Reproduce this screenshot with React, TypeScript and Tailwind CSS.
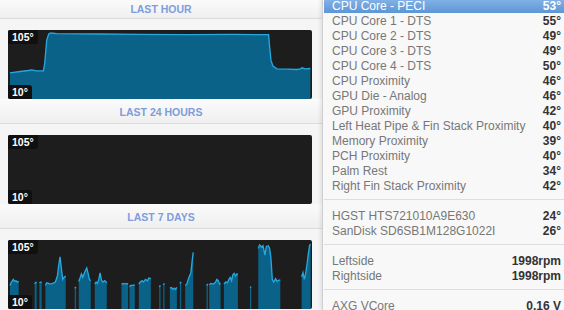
import React from "react";

const sensors: [string, string][] = [
  ["CPU Core 1 - DTS", "55°"],
  ["CPU Core 2 - DTS", "49°"],
  ["CPU Core 3 - DTS", "49°"],
  ["CPU Core 4 - DTS", "50°"],
  ["CPU Proximity", "46°"],
  ["GPU Die - Analog", "46°"],
  ["GPU Proximity", "42°"],
  ["Left Heat Pipe & Fin Stack Proximity", "40°"],
  ["Memory Proximity", "39°"],
  ["PCH Proximity", "40°"],
  ["Palm Rest", "34°"],
  ["Right Fin Stack Proximity", "42°"],
];

const disks: [string, string][] = [
  ["HGST HTS721010A9E630", "24°"],
  ["SanDisk SD6SB1M128G1022I", "26°"],
];

const fans: [string, string][] = [
  ["Leftside", "1998rpm"],
  ["Rightside", "1998rpm"],
];

// points in "3x" coordinates, viewBox maps them onto the chart
const hourLine =
  "30,218 60,214 85,211 95,209 110,212 130,212 134,190 140,120 146,102 152,99 170,101 300,102 420,103 560,104 700,103 805,104 808,140 812,180 818,198 830,206 860,207 890,208 900,206 906,203 914,206 930,205";

// spiky bursts for the 7 day view, each is its own closed shape
const weekSegments: string[] = [
  "30,250 34,240 40,232 44,238 48,236 52,240 56,238",
  "104,245 106,242 110,240",
  "118,242 122,240 125,240",
  "136,250 140,242 146,244 150,246 158,244 166,240 172,222 176,190 180,165 184,200 188,232 192,226 197,222",
  "224,258 228,255",
  "236,238 240,228 244,216 248,226 254,210 260,198 264,214 268,232 272,236",
  "284,246 288,240 292,244 296,232 300,213 304,234 308,240 314,236 320,242",
  "364,246 370,244 376,246 380,244 384,246",
  "388,254 392,250 398,250 404,248",
  "416,246 420,240 426,236 430,240 436,232 442,236 446,228 452,230",
  "477,254 481,250",
  "489,248 493,244",
  "509,258 514,256 518,262 522,258 526,262 530,256",
  "539,244 543,240",
  "555,250 560,246 564,232 568,222 572,212 576,176 579,152",
  "619,250 623,246",
  "627,248 632,244 640,246 646,240 650,232 654,236 658,246 661,244",
  "671,246 676,240 682,242 686,232 690,226 694,236 698,218 702,214 706,222 710,216 713,218",
  "749,256 753,254",
  "774,140 778,130 784,136 788,132 794,160 798,134 804,132 808,140 812,170 816,232 820,240 826,230 830,238 836,234 840,234",
  "904,224 908,212 912,232 916,214 920,188 924,156 928,130 931,128",
];

function areaFrom(points: string, bottom: number) {
  const pts = points.split(" ");
  const first = pts[0].split(",")[0];
  const last = pts[pts.length - 1].split(",")[0];
  return `M${first},${bottom} L${pts.join(" L")} L${last},${bottom} Z`;
}

const Chart = ({ children }: { children?: React.ReactNode }) => (
  <div className="relative h-[69px] bg-[#1d1d1d] rounded-[2px] overflow-hidden">
    {children}
    <div className="absolute left-0 top-0 h-[14px] px-[4px] flex items-center bg-[#101010] rounded-br-[3px] text-white font-bold text-[10.5px] leading-none">
      105°
    </div>
    <div className="absolute left-0 bottom-0 h-[14px] px-[4px] flex items-center bg-[#101010] rounded-tr-[3px] text-white font-bold text-[10.5px] leading-none">
      10°
    </div>
  </div>
);

const Header = ({ title, first }: { title: string; first?: boolean }) => (
  <div
    className={`flex items-center justify-center border-b border-[#dcdcdc] bg-gradient-to-b from-[#fbfbfb] to-[#efefef] text-[10.5px] font-bold text-[#7d9ddc] ${
      first ? "h-[19px] pt-[1px]" : "h-[25px] pt-[4px]"
    }`}>
    {title}
  </div>
);

const Row = ({ label, value }: { label: string; value: string }) => (
  <div className="h-[15px] flex items-center justify-between pl-[8px] pr-[3px]">
    <span className="text-[12px] text-[#777]">{label}</span>
    <span className="text-[12px] font-bold text-[#333]">{value}</span>
  </div>
);

export default function App() {
  return (
    <div
      className="w-[564px] h-[310px] overflow-hidden flex bg-[#f4f4f4]"
      style={{ fontFamily: '"Liberation Sans", Arial, sans-serif' }}>
      {/* graphs column */}
      <div className="w-[322px] shrink-0 flex flex-col bg-[#f5f5f5]">
        <Header title="LAST HOUR" first />
        <div className="px-[8px] pt-[11px] pr-[10px]">
          <Chart>
            <svg
              className="absolute inset-0"
              width="100%"
              height="100%"
              viewBox="24 90 911 206"
              preserveAspectRatio="none">
              <path d={areaFrom(hourLine, 300)} fill="#0b6288" />
              <polyline points={hourLine} fill="none" stroke="#25a8e0" strokeWidth="4" />
            </svg>
          </Chart>
        </div>
        <Header title="LAST 24 HOURS" />
        <div className="px-[8px] pt-[11px] pr-[10px]">
          <Chart />
        </div>
        <Header title="LAST 7 DAYS" />
        <div className="px-[8px] pt-[11px] pr-[10px]">
          <Chart>
            <svg
              className="absolute inset-0"
              width="100%"
              height="100%"
              viewBox="24 115 911 205"
              preserveAspectRatio="none">
              {weekSegments.map((s, i) => (
                <g key={i}>
                  <path d={areaFrom(s, 325)} fill="#0b6288" />
                  <polyline points={s} fill="none" stroke="#25a8e0" strokeWidth="4" />
                </g>
              ))}
            </svg>
          </Chart>
        </div>
      </div>

      {/* sensor list */}
      <div className="flex-1 bg-[#f8f8f8] border-l border-[#cfcfcf] shadow-[-2px_0_3px_rgba(0,0,0,0.08)] pl-[1px] -mt-[2px]">
        <div className="h-[15px] flex items-center justify-between pl-[8px] pr-[3px] rounded-tl-[4px] bg-gradient-to-b from-[#86b5e8] to-[#5d95d6] text-white">
          <span className="text-[12px]">CPU Core - PECI</span>
          <span className="text-[12px] font-bold">53°</span>
        </div>
        {sensors.map(([l, v]) => (
          <Row key={l} label={l} value={v} />
        ))}
        <div className="h-[6px]" />
        <div className="border-t border-[#dedede] pt-[8px] pb-[6px]">
          {disks.map(([l, v]) => (
            <Row key={l} label={l} value={v} />
          ))}
        </div>
        <div className="border-t border-[#dedede] pt-[8px] pb-[6px]">
          {fans.map(([l, v]) => (
            <Row key={l} label={l} value={v} />
          ))}
        </div>
        <div className="border-t border-[#dedede] pt-[8px]">
          <Row label="AXG VCore" value="0.16 V" />
        </div>
      </div>
    </div>
  );
}
